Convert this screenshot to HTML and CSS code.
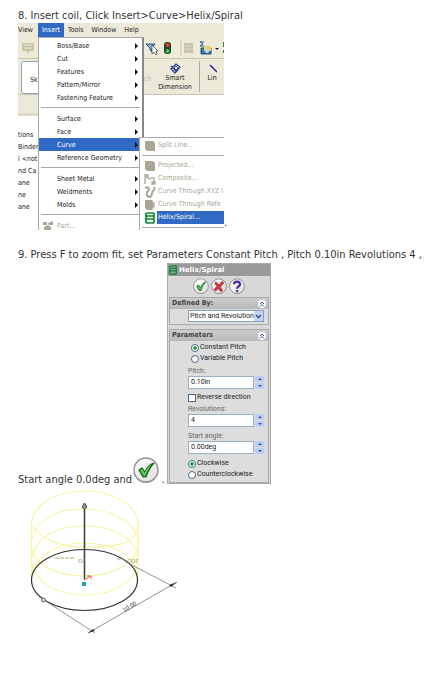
FILE: index.html
```html
<!DOCTYPE html>
<html lang="en">
<head>
<meta charset="utf-8">
<title>Insert a coil</title>
<link rel="stylesheet" href="styles.css">
</head>
<body>
<svg width="0" height="0" class="defs" aria-hidden="true">
  <defs>
    <linearGradient id="disc" x1="0" y1="0" x2="1" y2="1"><stop offset="0" stop-color="#fff"/><stop offset="1" stop-color="#ddd"/></linearGradient>
    <symbol id="tick" viewBox="0 0 26 27">
      <circle cx="13" cy="14" r="12" fill="#aaa"/><circle cx="13" cy="13" r="12" fill="url(#disc)" stroke="#909090" stroke-width="1.4"/>
      <path d="M6 13l3-2 3 4c2-5 5-8 9-9-4 4-6 8-8 14h-3z" fill="#3fae3f" stroke="#17661c" stroke-width="1.2" stroke-linejoin="round"/>
      <path d="M8.500 13l3 4.500c2-4 3-6 5-8" fill="none" stroke="#8bdc85"/>
    </symbol>
    <symbol id="coil" viewBox="0 0 12 12">
      <path d="M10 1H4C1 1 1 4 4 4h4c3 0 3 3 0 3H4c-3 0-3 4 0 4h6M4 4c-3 0-3 3 0 3M8 1c3 0 3 3 0 3M8 7c3 0 3 4 0 4" fill="none" stroke="#118a35" stroke-width="1.700"/>
    </symbol>
    <symbol id="block" viewBox="0 0 12 12"><path d="M1 1h8l2 2v8H3L1 9z" fill="#aaa694"/></symbol>
  </defs>
</svg>
<main>
  <p>8. Insert coil, Click Insert&gt;Curve&gt;Helix/Spiral</p>
  <div class="shot-line">
    <section class="app" aria-label="Insert menu">
      <nav class="menubar">
        <button>View</button><button class="open">Insert</button><button>Tools</button><button>Window</button><button>Help</button>
      </nav>
      <div class="toolbar">
        <svg width="18" height="14" viewBox="0 0 18 14"><path d="M4 2h12v8h-4l-3 3v-3H4z" fill="#cbc5a8"/><path d="M6 4h8M6 7h8" stroke="#eee9d5"/></svg>
        <svg class="tools" width="84" height="16" viewBox="0 0 84 16">
          <path d="M2 4h9L8 8v4L6 10V8z" fill="#8db6d5" stroke="#24527b"/><path d="M8 5v9l2-2 2 3 1-1-1-3h2z" fill="#fff" stroke="#333" stroke-width=".7"/>
          <rect x="20" y="2" width="7" height="12" rx="3" fill="#28432c"/><circle cx="23.500" cy="5" r="2" fill="#e83a29"/><circle cx="23.500" cy="11" r="2" fill="#37ce55"/>
          <path d="M37 1v14" stroke="#c8c4b2"/>
          <path d="M40 3h9v10h-9z" fill="#c5bfa7"/><path d="M40 6h9M40 9h9M43 3v10M46 3v10" stroke="#e6e1cc" stroke-width=".7"/>
          <path d="M60 2h-4l3 2-3 2h4" fill="none" stroke="#2358aa"/><path d="M57 8h10v6H57z" fill="#3974af" stroke="#234c75"/><path d="M60 6h7v5h-7z" fill="#e8cf70"/><circle cx="63" cy="11" r="2" fill="#bde0f0"/>
          <path d="M71 8h4l-2 2z" fill="#222"/><path d="M79 2h3v5h-3zM79 10h3v3h-3z" fill="#24804b"/>
        </svg>
      </div>
      <div class="commands">
        <span class="sketch">Sk</span><span class="faded">ch</span>
        <button class="dimension"><svg width="12" height="11" viewBox="0 0 12 11"><path d="M2 6l5-5 4 3-5 6zM2 3l6 6" fill="#dce9f5" stroke="#263e98" stroke-width="1.300"/><path d="M5 5l2-2 2 2-2 2z" fill="#fff" stroke="#447"/></svg>Smart<br>Dimension</button>
        <button class="line"><svg width="9" height="11" viewBox="0 0 9 11"><path d="M2 2l7 7" stroke="#202890" stroke-width="1.500"/></svg>Lin</button>
      </div>
      <div class="tree-tab"></div>
      <ul class="tree"><li>tions</li><li>Binder</li><li>l &lt;not</li><li>nd Ca</li><li>ane</li><li>ne</li><li>ane</li></ul>
      <div class="menu">
        <button>Boss/Base</button><button>Cut</button><button>Features</button><button>Pattern/Mirror</button><button>Fastening Feature</button>
        <hr>
        <button>Surface</button><button>Face</button><button class="active">Curve</button><button>Reference Geometry</button>
        <hr>
        <button>Sheet Metal</button><button>Weldments</button><button>Molds</button>
        <hr>
        <button class="off part" disabled><svg width="12" height="12" viewBox="0 0 12 12"><path d="M1 2h4v3H1zM6 3l5-2v4H7zM2 7l4-2 3 2v4l-4 1-3-2z" fill="#aaa694"/></svg>Part...</button>
      </div>
      <div class="submenu">
        <button disabled><svg width="12" height="12"><use href="#block"/></svg><span>Split Line...</span></button>
        <hr>
        <button disabled><svg width="12" height="12"><use href="#block"/></svg><span>Projected...</span></button>
        <button disabled><svg width="12" height="12" viewBox="0 0 12 12"><path d="M1 11V2h3v2H1m2 0c3 5 4-1 7 1v6M8 9h3v2H8z" fill="none" stroke="#aaa694" stroke-width="1.300"/></svg><span>Composite...</span></button>
        <button disabled><svg width="12" height="12" viewBox="0 0 12 12"><path d="M1 2c3-2 5 1 3 3s-2 5 1 6c4 0 2-4 4-6s1-3 2-4" fill="none" stroke="#aaa694" stroke-width="2"/></svg><span>Curve Through XYZ I</span></button>
        <button disabled><svg width="12" height="12" viewBox="0 0 12 12"><path d="M1 1h7l3 3v4l-3 3H3L1 9z" fill="#aaa694"/><path d="M8 2c3 2 3 6 0 8" fill="none" stroke="#ddd"/></svg><span>Curve Through Refe</span></button>
        <button class="active"><svg width="12" height="12"><use href="#coil"/></svg><span>Helix/Spiral...</span></button>
        <hr>
      </div>
    </section><span>.</span>
  </div>

  <p class="step">9. Press F to zoom fit, set Parameters Constant Pitch , Pitch 0.10in Revolutions 4 ,</p>
  <div class="settings-line">
    <span class="copy">Start angle 0.0deg and</span>
    <svg class="accept" width="26" height="27" role="img" aria-label="OK"><use href="#tick"/></svg>
    <span class="stop">.</span>
    <form class="panel">
      <header><svg width="10" height="10" viewBox="0 0 12 12"><use href="#coil" width="12" height="12"/></svg>Helix/Spiral</header>
      <div class="actions">
        <button type="button" aria-label="OK"><svg width="16" height="17" viewBox="0 0 26 27"><use href="#tick" width="26" height="27"/></svg></button>
        <button type="button" aria-label="Cancel"><svg width="16" height="17" viewBox="0 0 26 27"><circle cx="13" cy="13" r="12" fill="url(#disc)" stroke="#888" stroke-width="1.500"/><path d="M8 6l5 5 5-6 3 3-6 6 4 6-3 2-4-5-5 4-2-3 5-5-4-4z" fill="#d9363e" stroke="#8c1a25"/></svg></button>
        <button type="button" aria-label="Help"><svg width="16" height="17" viewBox="0 0 26 27"><circle cx="13" cy="13" r="12" fill="url(#disc)" stroke="#888" stroke-width="1.500"/><path d="M8 10c0-6 10-6 10 0 0 4-5 3-5 7" fill="none" stroke="#4c2b9b" stroke-width="3.500"/><circle cx="13" cy="21" r="2" fill="#4c2b9b"/></svg></button>
      </div>
      <section class="group defined">
        <h2>Defined By:<svg width="8" height="8" viewBox="0 0 8 8"><circle cx="4" cy="4" r="4" fill="#fff"/><path d="M2 4l2-2 2 2M2 6.500l2-2 2 2" fill="none" stroke="#3159a4"/></svg></h2>
        <div class="choice"><select aria-label="Defined by"><option>Pitch and Revolution</option></select><svg width="9" height="10" viewBox="0 0 9 10"><rect width="9" height="10" rx="1" fill="#c3d3fb"/><path d="M2 4l2.500 2.500L7 4" fill="none" stroke="#34538a" stroke-width="1.500"/></svg></div>
      </section>
      <section class="group parameters">
        <h2>Parameters<svg width="8" height="8" viewBox="0 0 8 8"><circle cx="4" cy="4" r="4" fill="#fff"/><path d="M2 4l2-2 2 2M2 6.500l2-2 2 2" fill="none" stroke="#3159a4"/></svg></h2>
        <div class="fields">
          <label class="pick inset"><input type="radio" name="pitch" checked>Constant Pitch</label>
          <label class="pick inset"><input type="radio" name="pitch">Variable Pitch</label>
          <label class="name first" for="pitch">Pitch:</label>
          <div class="number"><input id="pitch" value="0.10in"><span><button type="button" aria-label="Increase pitch"></button><button type="button" aria-label="Decrease pitch"></button></span></div>
          <label class="pick reverse"><input type="checkbox">Reverse direction</label>
          <label class="name" for="revs">Revolutions:</label>
          <div class="number"><input id="revs" value="4"><span><button type="button" aria-label="Increase revolutions"></button><button type="button" aria-label="Decrease revolutions"></button></span></div>
          <label class="name" for="angle">Start angle:</label>
          <div class="number"><input id="angle" value="0.00deg"><span><button type="button" aria-label="Increase angle"></button><button type="button" aria-label="Decrease angle"></button></span></div>
          <div class="turn">
            <label class="pick"><input type="radio" name="turn" checked>Clockwise</label>
            <label class="pick"><input type="radio" name="turn">Counterclockwise</label>
          </div>
        </div>
      </section>
    </form>
  </div>

  <svg class="helix" width="165" height="150" viewBox="18 485 165 150" role="img" aria-label="Helix preview">
    <g fill="none" stroke="#f7f5a0" stroke-width="1.100">
      <path d="M31.500 573V523C31 503 57 489 84 489s54 13 54 34v48"/>
      <path d="M138 523c0 20-28 23-54 22-27 0-42-9-53-22M31 541c4-23 24-34 53-34s54 14 54 34-24 33-54 33-53-13-53-33M31 558c4-22 24-34 53-34s54 13 54 34M31 575c3-20 25-34 53-34s54 13 54 34M31 558c3 21 24 35 54 35s52-14 53-35"/>
    </g>
    <ellipse cx="84.500" cy="578" rx="53" ry="30.500" fill="none" stroke="#333" stroke-width="1.200"/>
    <g fill="none" stroke="#777" stroke-width=".8"><path d="M126 560l50 26M44 598l51 33M88 631l89-51"/></g>
    <path d="M88 631l7-2-2-2zM177 580l-8 3 2 2z" fill="#333"/>
    <path d="M84.500 577v-73" stroke="#444" stroke-width="1.600"/><path d="M82 505l2.500-4 2.500 4-2.500 2z" fill="#999" stroke="#444"/>
    <circle cx="43.500" cy="598" r="2" fill="#ded9a5" stroke="#666"/>
    <path d="M84 578l7-4M87 574h4v3" fill="none" stroke="#e35b50"/><path d="M82 580h4v4h-4z" fill="#23a4b5"/>
    <path d="M55 556h20M117 557h7" stroke="#aaa680" stroke-dasharray="4 1"/>
    <g class="drawing-text"><text x="78" y="561">or</text><text x="127" y="561">cor</text><text class="measure" x="124" y="610" transform="rotate(-30 124 610)">10.00</text></g>
  </svg>
</main>
</body>
</html>
```
FILE: styles.css
```css
* { box-sizing: border-box; }
body { margin: 0; background: #fff; color: #333; font: 11px/14px "DejaVu Sans Condensed", "DejaVu Sans", sans-serif; }
.defs { position: absolute; }
main { padding: 9px 18px; }
p { margin: 0; white-space: nowrap; }
button, input, select { font: inherit; color: inherit; margin: 0; border: 0; padding: 0; background: none; }
svg { flex: none; }
hr { margin: 3px 2px 4px; border: 0; border-top: 1px solid #aaa99f; }

.shot-line { display: flex; align-items: flex-end; }
.app { position: relative; width: 206px; height: 207px; overflow: hidden; color: #222; font: 7px/12px "DejaVu Sans Condensed", "DejaVu Sans", sans-serif; }
.menubar { display: flex; height: 14px; background: #ece9d8; }
.menubar button { padding: 0 4px; }
.menubar button:first-child { width: 20px; padding: 0; text-align: left; }
.menubar .open { background: #316ac5; color: #fff; }
.toolbar { display: flex; justify-content: space-between; align-items: center; height: 22px; padding: 2px 0; background: #eeead8; border-bottom: 1px solid #c8c5b4; }
.toolbar .tools { margin-right: -4px; }
.commands { display: flex; justify-content: flex-end; height: 36px; background: #ece9d8; border-bottom: 1px solid #c8c5b4; }
.sketch { position: absolute; left: 0; width: 105px; height: 33px; margin: 2px 0 2px 3px; padding: 13px 8px; line-height: 10px; background: #fff; border: 1px solid #8ca7bd; border-radius: 3px; }
.faded { padding-top: 14px; color: #bbb; }
.dimension, .line { display: flex; flex-direction: column; align-items: center; line-height: 9px; }
.dimension { width: 48px; padding-top: 4px; }
.line { width: 25px; margin: 2px 0; padding-top: 2px; border-left: 1px solid #aaa; }
.tree-tab { width: 20px; height: 21px; background: #ece9d8; border-bottom: 3px solid #dedac9; }
.tree { margin: 13px 0 0; padding: 0; list-style: none; white-space: nowrap; }
.menu, .submenu { position: absolute; background: #fff; border: 1px solid #aaa; white-space: nowrap; }
.menu { top: 14px; left: 20px; width: 106px; height: 200px; padding-top: 1px; border-right: 2px solid #888; }
.menu button, .submenu button { display: flex; align-items: center; width: 100%; height: 13px; }
.menu button { justify-content: space-between; padding: 0 4px 0 18px; }
.menu button:not(.off)::after { content: ""; border: 3px solid transparent; border-left-color: #111; border-right: 0; }
.menu .active { background: #316ac5; color: #fff; }
.menu .off { justify-content: flex-start; gap: 3px; padding-left: 3px; color: #aaa694; }
.submenu { top: 114px; left: 121px; width: 110px; height: 100px; padding-top: 1px; }
.submenu hr { margin: 3px 2px; }
.submenu button { gap: 1px; padding-left: 4px; color: #aaa694; }
.submenu span { flex: 1; padding-left: 1px; line-height: 13px; text-align: left; }
.submenu .active span { background: #316ac5; color: #fff; }

.step { margin-top: 18px; }
.settings-line { display: flex; align-items: flex-end; margin-top: 1px; }
.copy, .stop { line-height: 8px; }
.copy { width: 115px; white-space: nowrap; }
.stop { width: 8px; text-align: center; }
.panel { width: 104px; background: #d8d8d8; border: 1px solid #aaa; color: #222; font: 7px/9px Roboto, sans-serif; }
.panel header { display: flex; align-items: center; gap: 1px; height: 12px; background: #999; color: #fff; font: bold 7px/9px "DejaVu Sans", sans-serif; }
.actions { display: flex; justify-content: center; gap: 2px; height: 21px; padding-top: 2px; }
.actions button { width: 16px; height: 17px; }
.group { margin: 0 1px 4px; background: #ddd; border: 1px solid #aaa; }
.parameters { margin-bottom: 0; }
h2 { display: flex; align-items: center; justify-content: space-between; height: 11px; margin: 0; padding: 0 2px; background: linear-gradient(#ccc, #b8b8b8); color: #444; font: bold 7px/9px "DejaVu Sans Condensed", "DejaVu Sans", sans-serif; }
.choice { position: relative; margin: 1px 4px 2px 18px; }
select { display: block; appearance: none; width: 100%; height: 12px; padding-left: 1px; background: #fff; border: 1px solid #839fb9; }
.choice svg { position: absolute; right: 1px; top: 1px; }
.fields { padding: 1px 4px 2px 18px; white-space: nowrap; }
.pick { display: flex; align-items: center; gap: 1px; height: 11px; }
.inset { padding-left: 3px; }
.pick input { appearance: none; flex: none; width: 8px; height: 8px; background: #fff; border: 1px solid #476b8a; }
.pick input[type=radio] { border-radius: 50%; }
.pick input[type=radio]:checked { background: radial-gradient(#219b31 35%, #fff 45%); }
.name { display: block; height: 9px; color: #666; }
.first { margin-top: 3px; }
.number { display: flex; gap: 1px; height: 13px; }
.number + .name { margin-top: 5px; }
.number input { flex: 1; min-width: 0; padding-left: 2px; background: #fff; border: 1px solid #9aafbf; }
.number span { display: flex; flex-direction: column; gap: 1px; width: 9px; }
.number button { position: relative; flex: 1; background: #bccdf6; border-radius: 1px; }
.number button::after { content: ""; position: absolute; left: 3px; top: 2px; border: 2px solid transparent; border-bottom-color: #38588f; border-top: 0; }
.number button + button::after { border-bottom: 0; border-top: 2px solid #38588f; }
.reverse { margin: 3px 0 2px; }
.turn { padding-top: 4px; }
.helix { display: block; margin-top: 3px; }
.drawing-text { fill: #aaa67e; font: 8px "Liberation Sans", sans-serif; }
.drawing-text .measure { fill: #333; font-size: 6px; }
```
